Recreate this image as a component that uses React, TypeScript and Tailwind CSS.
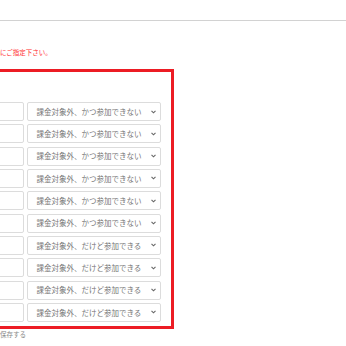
const rows = [
  "課金対象外、かつ参加できない",
  "課金対象外、かつ参加できない",
  "課金対象外、かつ参加できない",
  "課金対象外、かつ参加できない",
  "課金対象外、かつ参加できない",
  "課金対象外、かつ参加できない",
  "課金対象外、だけど参加できる",
  "課金対象外、だけど参加できる",
  "課金対象外、だけど参加できる",
  "課金対象外、だけど参加できる",
];

function Chevron() {
  return (
    <svg width="5" height="4" viewBox="0 0 5 4" className="shrink-0">
      <path d="M0.5 0.8 L2.5 2.8 L4.5 0.8" fill="none" stroke="#666" strokeWidth="1.1" />
    </svg>
  );
}

export default function App() {
  return (
    <div className="w-[346px] h-[346px] bg-white overflow-hidden font-['Noto_Sans_CJK_JP',sans-serif]">
      <div className="h-[20px]" />
      <div className="h-px bg-[#d2d2d2]" />

      <p className="mt-[27px] text-[6.5px] leading-[8px] text-[#ff3030] whitespace-nowrap">
        にご指定下さい。
      </p>

      <div className="mt-[13px] -ml-[200px] w-[374px] border-[3px] border-[#ec1c24] pt-[30px] pb-[4px] pr-[10px] flex flex-col gap-[3.33px]">
        {rows.map((label, i) => (
          <div key={i} className="flex gap-[3.5px] h-[19px]">
            <div className="flex-1 border border-[#dcdcdc] rounded-[2px] bg-white" />
            <div className="w-[134px] flex items-center justify-between border border-[#dcdcdc] rounded-[2px] bg-white pl-[8.5px] pr-[4px]">
              <span className="text-[7.5px] leading-none text-[#777] whitespace-nowrap">{label}</span>
              <Chevron />
            </div>
          </div>
        ))}
      </div>

      <p className="mt-[1px] text-[6.5px] leading-[8px] text-[#888] whitespace-nowrap">
        保存する
      </p>
    </div>
  );
}
